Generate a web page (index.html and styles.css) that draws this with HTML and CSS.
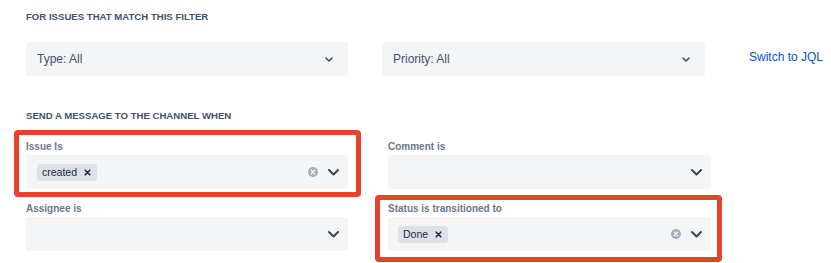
FILE: index.html
```html
<!DOCTYPE html>
<html lang="en">
<head>
  <meta charset="UTF-8">
  <title>Channel Notifications</title>
  <link rel="stylesheet" href="styles.css">
</head>
<body>
  <div class="page">
    <h2 class="section-title first">For issues that match this filter</h2>
    <div class="filter-row">
      <div class="filter-select type-select">
        <span>Type: All</span>
        <svg class="small-chevron" width="8" height="5" viewBox="0 0 8 5"><path d="M1 1l3 3 3-3" fill="none" stroke="#42526e" stroke-width="1.6" stroke-linecap="round" stroke-linejoin="round"/></svg>
      </div>
      <div class="filter-select priority-select">
        <span>Priority: All</span>
        <svg class="small-chevron" width="8" height="5" viewBox="0 0 8 5"><path d="M1 1l3 3 3-3" fill="none" stroke="#42526e" stroke-width="1.6" stroke-linecap="round" stroke-linejoin="round"/></svg>
      </div>
      <a class="jql-link" href="#">Switch to JQL</a>
    </div>

    <h2 class="section-title second">Send a message to the channel when</h2>
    <div class="fields">
      <div class="field highlighted hl-issue">
        <label>Issue Is</label>
        <div class="multi-select">
          <span class="chip">created <svg class="chip-x" width="7" height="7" viewBox="0 0 7 7"><path d="M1.2 1.2l4.6 4.6M5.8 1.2L1.2 5.8" stroke="#172b4d" stroke-width="1.6" stroke-linecap="round"/></svg></span>
          <span class="controls">
            <svg class="clear" width="10" height="10" viewBox="0 0 10 10"><circle cx="5" cy="5" r="5" fill="#a5adba"/><path d="M3.3 3.3l3.4 3.4M6.7 3.3l-3.4 3.4" stroke="#fff" stroke-width="1.3" stroke-linecap="round"/></svg>
            <svg class="chevron" width="11" height="7" viewBox="0 0 11 7"><path d="M1 1l4.5 4.5L10 1" fill="none" stroke="#344563" stroke-width="2" stroke-linecap="round" stroke-linejoin="round"/></svg>
          </span>
        </div>
      </div>
      <div class="field">
        <label>Comment is</label>
        <div class="multi-select">
          <span class="controls">
            <svg class="chevron" width="11" height="7" viewBox="0 0 11 7"><path d="M1 1l4.5 4.5L10 1" fill="none" stroke="#344563" stroke-width="2" stroke-linecap="round" stroke-linejoin="round"/></svg>
          </span>
        </div>
      </div>
      <div class="field">
        <label>Assignee is</label>
        <div class="multi-select">
          <span class="controls">
            <svg class="chevron" width="11" height="7" viewBox="0 0 11 7"><path d="M1 1l4.5 4.5L10 1" fill="none" stroke="#344563" stroke-width="2" stroke-linecap="round" stroke-linejoin="round"/></svg>
          </span>
        </div>
      </div>
      <div class="field highlighted hl-status">
        <label>Status is transitioned to</label>
        <div class="multi-select">
          <span class="chip">Done <svg class="chip-x" width="7" height="7" viewBox="0 0 7 7"><path d="M1.2 1.2l4.6 4.6M5.8 1.2L1.2 5.8" stroke="#172b4d" stroke-width="1.6" stroke-linecap="round"/></svg></span>
          <span class="controls">
            <svg class="clear" width="10" height="10" viewBox="0 0 10 10"><circle cx="5" cy="5" r="5" fill="#a5adba"/><path d="M3.3 3.3l3.4 3.4M6.7 3.3l-3.4 3.4" stroke="#fff" stroke-width="1.3" stroke-linecap="round"/></svg>
            <svg class="chevron" width="11" height="7" viewBox="0 0 11 7"><path d="M1 1l4.5 4.5L10 1" fill="none" stroke="#344563" stroke-width="2" stroke-linecap="round" stroke-linejoin="round"/></svg>
          </span>
        </div>
      </div>
    </div>
  </div>
</body>
</html>
```

FILE: styles.css
```css
body {
  margin: 0;
  padding: 0;
  background-color: #fff;
  font-family: "Liberation Sans", Arial, sans-serif;
  color: #172b4d;
}
.page {
  padding: 0 0 12px 26px;
  width: 805px;
}
.section-title {
  margin: 0;
  font-size: 9.6px;
  line-height: 12px;
  font-weight: bold;
  text-transform: uppercase;
  color: #42526e;
}
.section-title.first {
  padding-top: 11px;
}
.section-title.second {
  margin-top: 34px;
}
/* Top filter row */
.filter-row {
  display: flex;
  align-items: center;
  margin-top: 19px;
}
.filter-select {
  height: 34px;
  box-sizing: border-box;
  display: flex;
  align-items: center;
  justify-content: space-between;
  padding: 0 15px 0 11px;
  background-color: #f4f5f7;
  border-radius: 3px;
  font-size: 12px;
  color: #42526e;
}
.type-select {
  width: 322px;
}
.priority-select {
  width: 323px;
  margin-left: 34px;
}
.small-chevron {
  display: block;
}
.jql-link {
  margin-left: 44px;
  margin-top: -4px;
  font-size: 12px;
  color: #0052cc;
  text-decoration: none;
}
/* Notification fields */
.fields {
  display: grid;
  grid-template-columns: 322px 323px;
  column-gap: 40px;
  row-gap: 14px;
  margin-top: 19px;
}
.field {
  position: relative;
}
.field label {
  display: block;
  height: 14px;
  font-size: 10px;
  line-height: 12px;
  font-weight: bold;
  color: #6b778c;
}
.multi-select {
  height: 34px;
  box-sizing: border-box;
  display: flex;
  align-items: center;
  padding: 0 9px 0 11px;
  background-color: #f4f5f7;
  border-radius: 3px;
}
.field:nth-child(even) .multi-select {
  padding-left: 10px;
}
.chip {
  display: inline-flex;
  align-items: center;
  height: 17px;
  padding: 0 6px 0 5px;
  background-color: #dfe1e6;
  border-radius: 3px;
  font-size: 10.5px;
  color: #172b4d;
}
.chip-x {
  display: block;
  margin-left: 7px;
}
.controls {
  margin-left: auto;
  display: flex;
  align-items: center;
  gap: 10px;
}
.controls svg {
  display: block;
}
/* Red highlight boxes drawn over the fields */
.highlighted::after {
  content: "";
  position: absolute;
  border: 5px solid #e5432a;
  border-radius: 4px;
  pointer-events: none;
}
.hl-issue::after {
  top: -11px;
  left: -12px;
  right: -13px;
  bottom: -8px;
}
.hl-status::after {
  top: -8px;
  left: -13px;
  right: -11px;
  bottom: -11px;
}
```
